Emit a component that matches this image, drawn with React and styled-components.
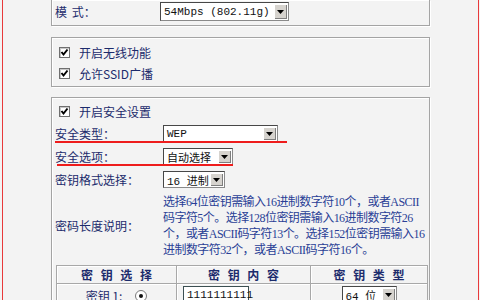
import React from 'react';
import styled, { createGlobalStyle } from 'styled-components';

const GlobalStyle = createGlobalStyle`
  html, body {
    margin: 0;
    padding: 0;
    background: #f3f3f3;
  }
  body {
    font-family: "Liberation Serif", "Noto Sans CJK SC", serif;
    font-size: 12px;
    color: #1c2b6c;
  }
`;

const Frame = styled.div`
  box-sizing: border-box;
  margin-left: 2px;
  width: 477px;
  height: 300px;
  overflow: hidden;
  border-left: 1px solid #e8393a;
  border-right: 1px solid #e8393a;
  padding-left: 48px;
`;

const Panel = styled.div`
  box-sizing: border-box;
  width: 379px;
  margin-top: ${(p) => p.$gap || 0}px;
  padding: ${(p) => p.$pad || '0'};
  border: 1px solid #a4a4a4;
  border-top: ${(p) => (p.$cut ? 'none' : '1px solid #a4a4a4')};
  box-shadow: 1px 1px 0 #ffffff, inset 1px 1px 0 #ffffff;
`;

const CheckRow = styled.label`
  display: flex;
  align-items: center;
  gap: 9px;
  height: 21px;
  padding-left: 7px;
  font-family: "Noto Sans CJK SC", sans-serif;
  line-height: 14px;
`;

const CheckBox = styled.span`
  box-sizing: border-box;
  width: 11px;
  height: 11px;
  background: #ffffff;
  border: 1px solid #6f6f6f;
  box-shadow: inset 1px 1px 0 #c8c8c8;
  display: flex;
  align-items: center;
  justify-content: center;
`;

const FieldRow = styled.div`
  position: relative;
  display: grid;
  grid-template-columns: ${(p) => p.$label}px auto;
  align-items: center;
  height: ${(p) => (p.$h ? `${p.$h}px` : 'auto')};
  padding: ${(p) => p.$pad || '0 0 0 3px'};

  &::after {
    content: '';
    display: ${(p) => (p.$mark ? 'block' : 'none')};
    position: absolute;
    top: 19px;
    left: ${(p) => (p.$mark ? p.$mark[0] : 0)}px;
    width: ${(p) => (p.$mark ? p.$mark[1] : 0)}px;
    height: 2px;
    background: #ee1c1c;
  }
`;

const Label = styled.span`
  font-family: "Noto Sans CJK SC", sans-serif;
  line-height: 14px;
  white-space: nowrap;
  word-spacing: ${(p) => p.$spread || 0}px;
`;

const SelectBox = styled.div`
  box-sizing: border-box;
  display: inline-flex;
  width: ${(p) => p.$w}px;
  height: ${(p) => p.$h || 17}px;
  background: #ffffff;
  border: 1px solid #8a8a8a;
  border-top-color: #474747;
  border-left-color: #474747;
  padding: 1px;
`;

const SelectText = styled.span`
  flex: 1;
  display: flex;
  align-items: center;
  padding-left: 2px;
  font-family: "Liberation Mono", "Noto Sans CJK SC", monospace;
  font-size: 11px;
  color: #111111;
  white-space: nowrap;
  overflow: hidden;
`;

const DropButton = styled.span`
  box-sizing: border-box;
  width: 13px;
  background: #d6d3ce;
  box-shadow: inset 1px 1px 0 #ffffff, inset -1px -1px 0 #7e7e7e;
  display: flex;
  align-items: center;
  justify-content: center;
`;

const Description = styled.div`
  line-height: 16px;
  white-space: nowrap;
  letter-spacing: -0.55px;
  color: #2a3f96;
`;

const KeyTable = styled.table`
  margin: 7px 0 0 4px;
  width: 368px;
  table-layout: fixed;
  border-collapse: collapse;
`;

const HeadCell = styled.th`
  height: 17px;
  padding: 0;
  border: 1px solid #a8a8a8;
  box-shadow: inset 1px 1px 0 #ffffff;
  font-family: "Noto Sans CJK SC", sans-serif;
  font-size: 12px;
  font-weight: 600;
  line-height: 14px;
  word-spacing: 5px;
  color: #1c2b6c;
  width: ${(p) => p.$w}px;
`;

const Cell = styled.td`
  height: 22px;
  padding: ${(p) => p.$pad || '0'};
  border: 1px solid #a8a8a8;
  box-shadow: inset 1px 1px 0 #ffffff;
  text-align: ${(p) => p.$align || 'center'};
  vertical-align: top;
  padding-top: 2px;
`;

const KeyName = styled.span`
  display: inline-flex;
  align-items: center;
  gap: 13px;
  font-family: "Noto Sans CJK SC", sans-serif;
  line-height: 14px;
  padding-top: 3px;
`;

const Radio = styled.span`
  box-sizing: border-box;
  width: 12px;
  height: 12px;
  border-radius: 50%;
  background: #ffffff;
  border: 1px solid #7a7a7a;
  display: inline-flex;
  align-items: center;
  justify-content: center;

  &::before {
    content: '';
    width: 4px;
    height: 4px;
    border-radius: 50%;
    background: #111111;
  }
`;

const KeyInput = styled.div`
  box-sizing: border-box;
  width: 66px;
  height: 18px;
  background: #ffffff;
  border: 1px solid #3c4f52;
  padding: 1px 3px;
  font-family: "Liberation Mono", monospace;
  font-size: 11px;
  line-height: 14px;
  color: #111111;
`;

const Check = () => (
  <svg width="9" height="9" viewBox="0 0 9 9">
    <path d="M1.5 4 L3.5 6.5 L7.5 1.5" fill="none" stroke="#000" strokeWidth="2" />
  </svg>
);

const Arrow = () => (
  <svg width="7" height="4" viewBox="0 0 7 4">
    <polygon points="0,0 7,0 3.5,4" fill="#000" />
  </svg>
);

function Select({ w, h, children }) {
  return (
    <SelectBox $w={w} $h={h}>
      <SelectText>{children}</SelectText>
      <DropButton>
        <Arrow />
      </DropButton>
    </SelectBox>
  );
}

export default function App() {
  return (
    <>
      <GlobalStyle />
      <Frame>
        <Panel $cut $pad="2px 0 4px 0">
          <FieldRow $label={105} $h={19}>
            <Label $spread={2}>模 式：</Label>
            <Select w={129} h={19}>54Mbps (802.11g)</Select>
          </FieldRow>
        </Panel>

        <Panel $gap={11} $pad="4px 0 2px 0">
          <CheckRow>
            <CheckBox><Check /></CheckBox>
            开启无线功能
          </CheckRow>
          <CheckRow>
            <CheckBox><Check /></CheckBox>
            允许SSID广播
          </CheckRow>
        </Panel>

        <Panel $gap={10} $pad="3px 0 20px 0">
          <CheckRow>
            <CheckBox><Check /></CheckBox>
            开启安全设置
          </CheckRow>
          <FieldRow $label={108} $h={23} $mark={[3, 232]}>
            <Label>安全类型：</Label>
            <Select w={115}>WEP</Select>
          </FieldRow>
          <FieldRow $label={108} $h={23} $mark={[5, 176]}>
            <Label>安全选项：</Label>
            <Select w={70}>自动选择</Select>
          </FieldRow>
          <FieldRow $label={108} $h={23}>
            <Label>密钥格式选择：</Label>
            <Select w={62}>16 进制</Select>
          </FieldRow>
          <FieldRow $label={108} $pad="3px 0 0 3px">
            <Label>密码长度说明：</Label>
            <Description>
              选择64位密钥需输入16进制数字符10个，或者ASCII
              <br />
              码字符5个。选择128位密钥需输入16进制数字符26
              <br />
              个，或者ASCII码字符13个。选择152位密钥需输入16
              <br />
              进制数字符32个，或者ASCII码字符16个。
            </Description>
          </FieldRow>

          <KeyTable>
            <thead>
              <tr>
                <HeadCell $w={119}>密 钥 选 择</HeadCell>
                <HeadCell $w={133}>密 钥 内 容</HeadCell>
                <HeadCell $w={116}>密 钥 类 型</HeadCell>
              </tr>
            </thead>
            <tbody>
              <tr>
                <Cell>
                  <KeyName>
                    密钥 1:
                    <Radio />
                  </KeyName>
                </Cell>
                <Cell $align="left" $pad="0 0 0 6px">
                  <KeyInput>1111111111</KeyInput>
                </Cell>
                <Cell>
                  <Select w={55}>64 位</Select>
                </Cell>
              </tr>
            </tbody>
          </KeyTable>
        </Panel>
      </Frame>
    </>
  );
}
